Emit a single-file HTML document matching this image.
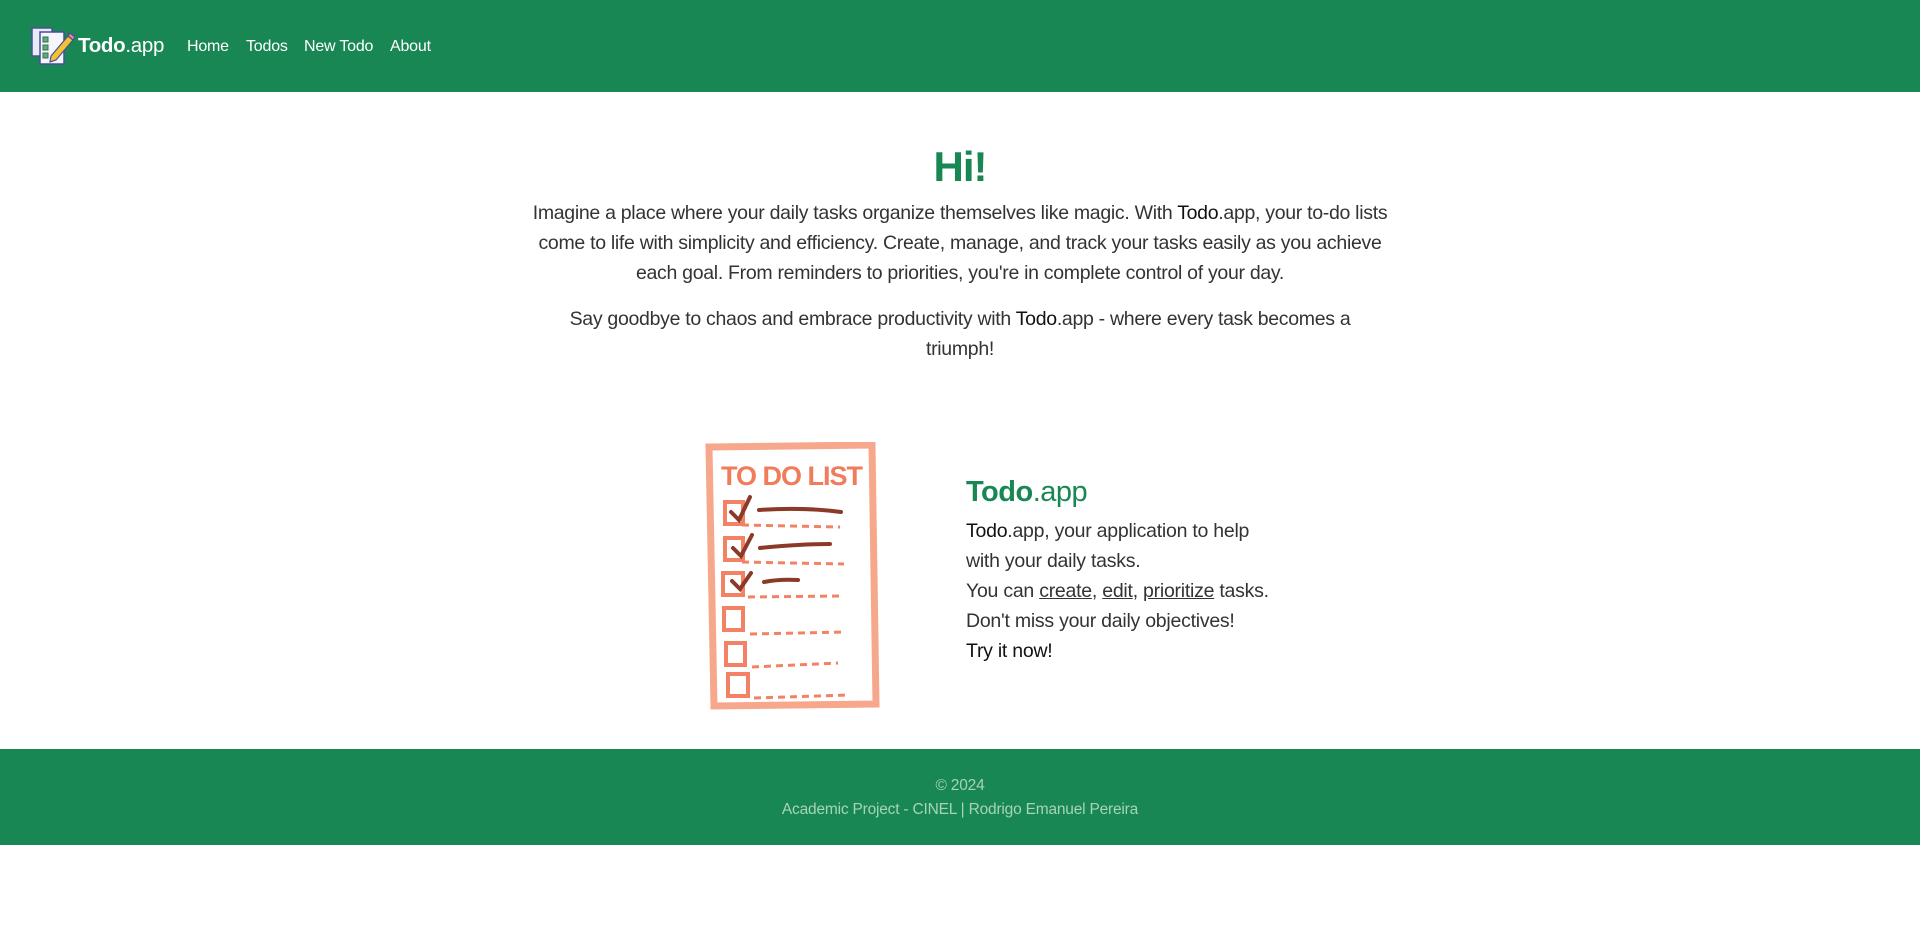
<!DOCTYPE html>
<html><head><meta charset="utf-8"><style>
*{margin:0;padding:0;box-sizing:border-box}
body{width:1920px;height:947px;background:#fff;font-family:"Liberation Sans",sans-serif;color:#212529;overflow:hidden;position:relative}
.nav{position:absolute;left:0;top:0;width:1920px;height:92px;background:#198754}
.brand{position:absolute;left:78px;top:34px;color:#fff;font-size:20.5px;letter-spacing:-0.3px}
.nav a{position:absolute;top:38px;color:#fff;font-size:16px;text-decoration:none;letter-spacing:-0.2px}
h1{position:absolute;left:0;width:1920px;top:143px;text-align:center;color:#198754;font-size:42px;font-weight:bold;letter-spacing:-1px}
.p{position:absolute;left:0;width:1920px;text-align:center;font-size:19.5px;color:#333;letter-spacing:-0.3px;white-space:nowrap;line-height:30px}
.p b,.r b{font-weight:normal;color:#111}
.r{position:absolute;left:966px;font-size:19.5px;color:#333;letter-spacing:-0.25px;white-space:nowrap}
.r u{text-decoration:underline}
.foot{position:absolute;left:0;top:749px;width:1920px;height:96px;background:#198754;color:#a6d3bb;text-align:center;font-size:15.5px;letter-spacing:-0.2px}
</style></head><body>
<div class="nav">
<svg style="position:absolute;left:31px;top:26px" width="44" height="40" viewBox="0 0 44 40">
<rect x="1" y="2" width="20" height="28" fill="#e8ecf8" stroke="#4a4f9a" stroke-width="1.5"/>
<rect x="9" y="6" width="24" height="32" fill="#f4f6fc" stroke="#4a4f9a" stroke-width="1.5"/>
<rect x="12" y="11" width="5" height="5" fill="#5bb07a" stroke="#3b6a55"/>
<rect x="12" y="19" width="5" height="5" fill="#5bb07a" stroke="#3b6a55"/>
<rect x="12" y="27" width="5" height="5" fill="#5bb07a" stroke="#3b6a55"/>
<path d="M20 30 L37 10 L42 14 L25 34 L19 36 Z" fill="#f2c230" stroke="#4a4f9a" stroke-width="1.2"/>
<path d="M37 10 L39 7 L44 11 L42 14 Z" fill="#e88a8a" stroke="#4a4f9a" stroke-width="1.2"/>
</svg>
<div class="brand"><b>Todo</b>.app</div>
<a style="left:187px">Home</a><a style="left:246px">Todos</a><a style="left:304px">New Todo</a><a style="left:390px">About</a>
</div>
<h1>Hi!</h1>
<div class="p" style="top:198px">Imagine a place where your daily tasks organize themselves like magic. With <b>Todo</b>.app, your to-do lists</div>
<div class="p" style="top:228px">come to life with simplicity and efficiency. Create, manage, and track your tasks easily as you achieve</div>
<div class="p" style="top:258px">each goal. From reminders to priorities, you're in complete control of your day.</div>
<div class="p" style="top:304px">Say goodbye to chaos and embrace productivity with <b>Todo</b>.app - where every task becomes a</div>
<div class="p" style="top:334px">triumph!</div>

<svg style="position:absolute;left:704px;top:442px" width="176" height="268" viewBox="0 0 176 268">
<path d="M5 5 L168 3 L172 262 L10 264 Z" fill="none" stroke="#f7a88c" stroke-width="7"/>
<text x="17" y="43" font-family="Liberation Sans,sans-serif" font-weight="bold" font-size="27" fill="#f07c5c" letter-spacing="-1">TO DO LIST</text>
<g fill="none" stroke="#f28263" stroke-width="4">
<rect x="21" y="60" width="18" height="22"/><rect x="21" y="96" width="18" height="22"/><rect x="19" y="131" width="20" height="22"/>
<rect x="20" y="166" width="19" height="22"/><rect x="22" y="201" width="19" height="22"/><rect x="24" y="232" width="20" height="22"/>
</g>
<g fill="none" stroke="#f28263" stroke-width="3" stroke-dasharray="7 5">
<path d="M38 83 L136 85"/><path d="M38 120 L140 122"/><path d="M44 155 L140 154"/><path d="M46 192 L142 190"/><path d="M48 225 L134 221"/><path d="M50 256 L144 253"/>
</g>
<g fill="none" stroke="#8b3a28" stroke-width="4" stroke-linecap="round">
<path d="M27 70 L35 78 L46 55"/><path d="M55 68 Q100 65 137 70"/>
<path d="M29 106 L37 114 L48 93"/><path d="M56 106 Q95 102 126 102"/>
<path d="M28 139 L36 147 L47 131"/><path d="M60 140 Q75 137 94 138"/>
</g>
</svg>

<div class="r" style="top:476px;font-size:29px;color:#198754;letter-spacing:-0.5px"><b style="font-weight:bold;color:#198754">Todo</b>.app</div>
<div class="r" style="top:520px"><b>Todo</b>.app, your application to help</div>
<div class="r" style="top:550px">with your daily tasks.</div>
<div class="r" style="top:580px">You can <u>create</u>, <u>edit</u>, <u>prioritize</u> tasks.</div>
<div class="r" style="top:610px">Don't miss your daily objectives!</div>
<div class="r" style="top:640px;color:#111">Try it now!</div>

<div class="foot"><div style="position:absolute;top:28px;width:100%">© 2024</div><div style="position:absolute;top:52px;width:100%">Academic Project - CINEL | Rodrigo Emanuel Pereira</div></div>
</body></html>
